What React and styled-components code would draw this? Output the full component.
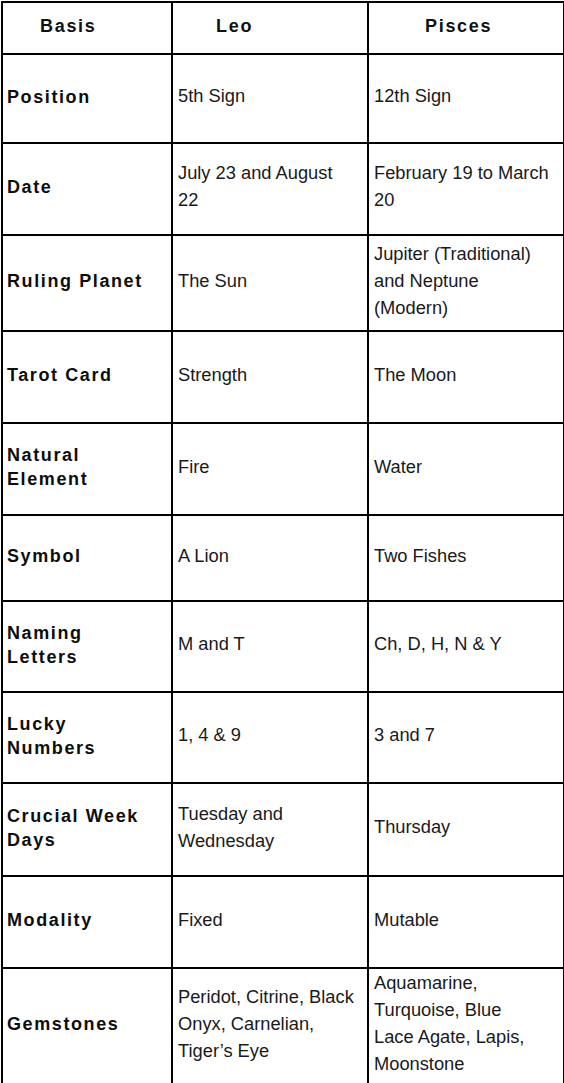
import React from "react";
import styled, { createGlobalStyle } from "styled-components";

const GlobalStyle = createGlobalStyle`
  html, body {
    margin: 0;
    padding: 0;
    background: #fff;
  }
  body {
    font-family: "Liberation Sans", Arial, sans-serif;
    color: #111;
  }
`;

const HEADERS = [
  { label: "Basis", indent: 37 },
  { label: "Leo", indent: 43 },
  { label: "Pisces", indent: 56 }
];

// line breaks follow the source table
const ROWS = [
  { basis: "Position", leo: "5th Sign", pisces: "12th Sign", h: 89 },
  { basis: "Date", leo: "July 23 and August\n22", pisces: "February 19 to March\n20", h: 92 },
  { basis: "Ruling Planet", leo: "The Sun", pisces: "Jupiter (Traditional)\nand Neptune\n(Modern)", h: 96 },
  { basis: "Tarot Card", leo: "Strength", pisces: "The Moon", h: 92 },
  { basis: "Natural\nElement", leo: "Fire", pisces: "Water", h: 92 },
  { basis: "Symbol", leo: "A Lion", pisces: "Two Fishes", h: 86 },
  { basis: "Naming\nLetters", leo: "M and T", pisces: "Ch, D, H, N & Y", h: 91 },
  { basis: "Lucky\nNumbers", leo: "1, 4 & 9", pisces: "3 and 7", h: 91 },
  { basis: "Crucial Week\nDays", leo: "Tuesday and\nWednesday", pisces: "Thursday", h: 93 },
  { basis: "Modality", leo: "Fixed", pisces: "Mutable", h: 92 },
  {
    basis: "Gemstones",
    leo: "Peridot, Citrine, Black\nOnyx, Carnelian,\nTiger’s Eye",
    pisces: "Aquamarine,\nTurquoise, Blue\nLace Agate, Lapis,\nMoonstone",
    h: 113
  }
];

const Table = styled.table`
  width: 562px;
  margin: 1px 0 0 1px;
  border-collapse: collapse;
  table-layout: fixed;
`;

const Col = styled.col`
  width: ${p => p.w}px;
`;

const HeadCell = styled.th`
  height: 46px;
  border: 2px solid #000;
  padding: 0 0 4px ${p => p.indent}px;
  text-align: left;
  vertical-align: middle;
  font-size: 18px;
  font-weight: 700;
  letter-spacing: 1.7px;
  color: #111;
`;

const Row = styled.tr`
  height: ${p => p.h}px;
`;

const LabelCell = styled.td`
  border: 2px solid #000;
  padding: 0 4px 4px 4px;
  vertical-align: middle;
  white-space: pre-line;
  font-size: 18px;
  font-weight: 700;
  letter-spacing: 1.6px;
  line-height: 24px;
  color: #0d0d0d;
`;

const ValueCell = styled.td`
  border: 2px solid #000;
  padding: 0 4px 6px 5px;
  vertical-align: middle;
  white-space: pre-line;
  font-size: 18.3px;
  letter-spacing: 0;
  line-height: 27px;
  color: #1a1a1a;
`;

export default function App() {
  return (
    <>
      <GlobalStyle />
      <Table>
        <colgroup>
          <Col w={170} />
          <Col w={196} />
          <Col w={196} />
        </colgroup>
        <thead>
          <tr>
            {HEADERS.map(h => (
              <HeadCell key={h.label} indent={h.indent}>
                {h.label}
              </HeadCell>
            ))}
          </tr>
        </thead>
        <tbody>
          {ROWS.map(r => (
            <Row key={r.basis} h={r.h}>
              <LabelCell>{r.basis}</LabelCell>
              <ValueCell>{r.leo}</ValueCell>
              <ValueCell>{r.pisces}</ValueCell>
            </Row>
          ))}
        </tbody>
      </Table>
    </>
  );
}
